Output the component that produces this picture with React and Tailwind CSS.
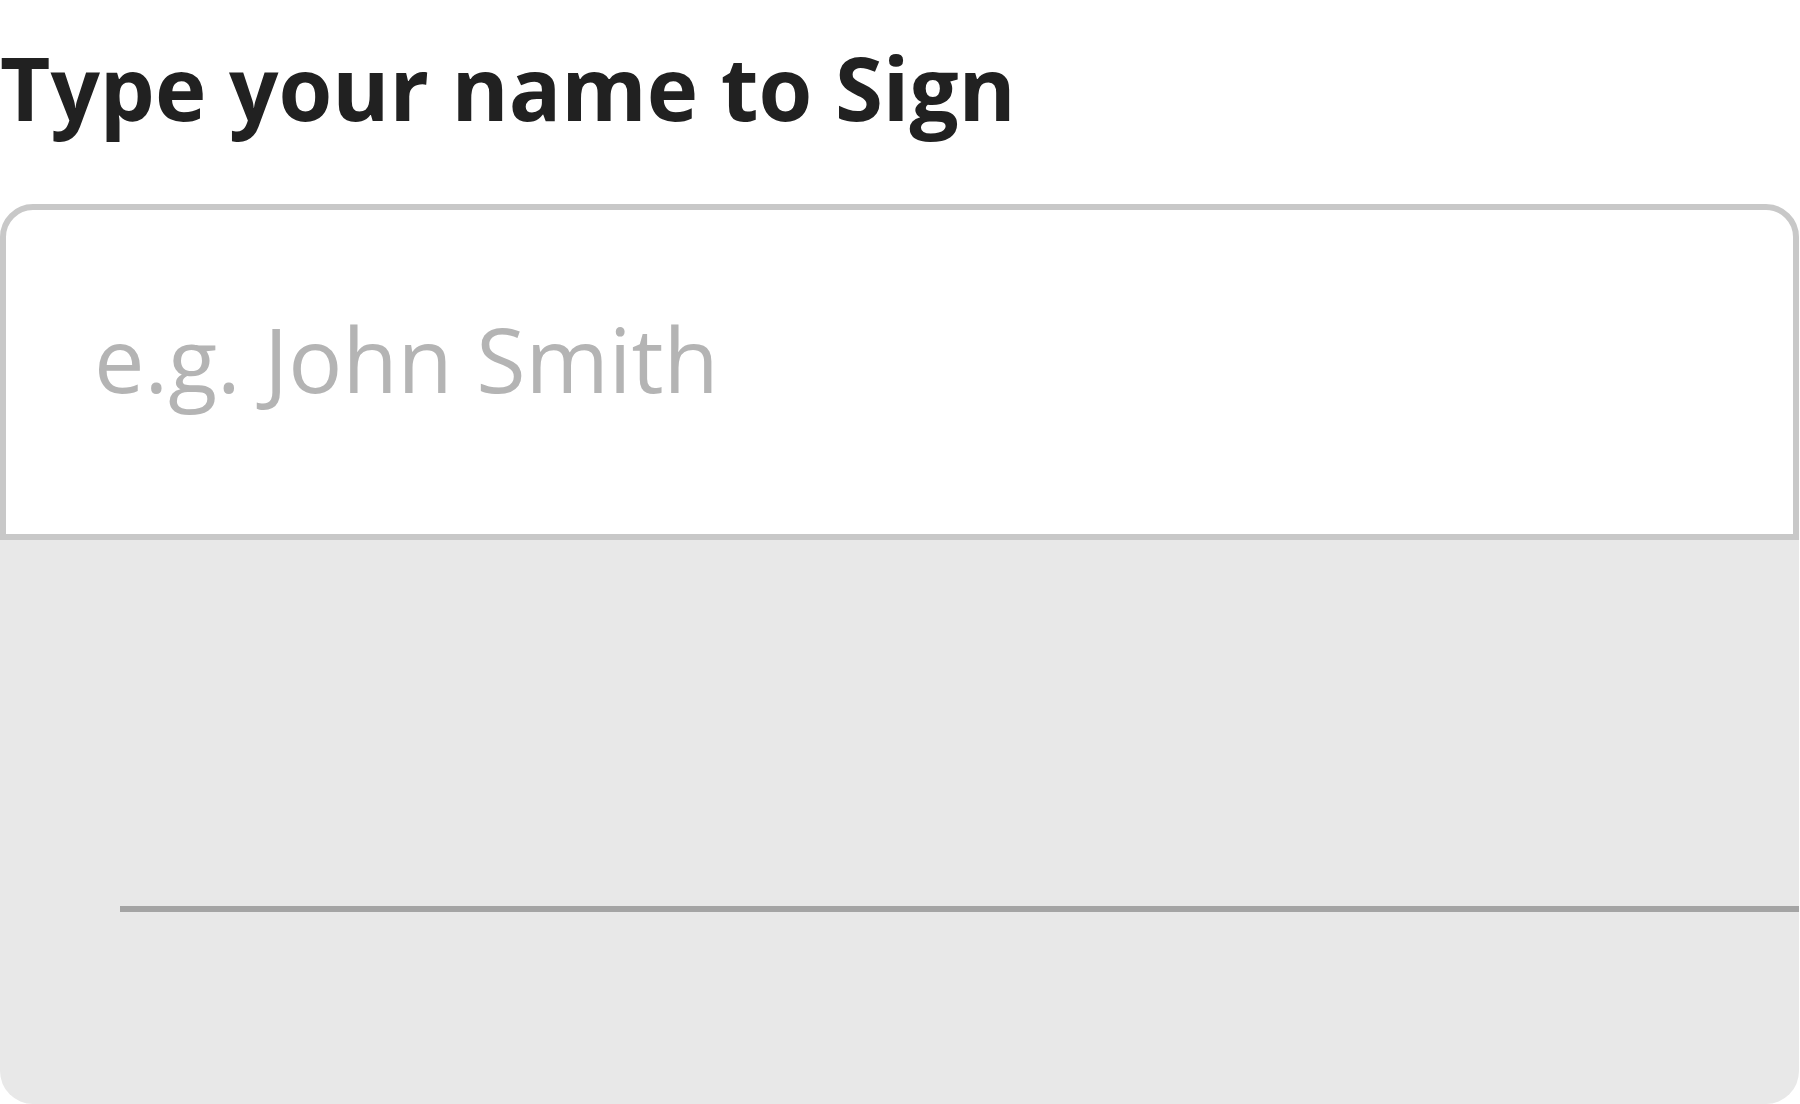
export default function App() {
  return (
    <div className="w-[1800px] h-[1104px] bg-white overflow-hidden flex flex-col" style={{ fontFamily: '"Open Sans", "Noto Sans", sans-serif' }}>
      <h1 className="text-[87px] font-bold leading-[117px] text-[#212121] pt-[29px] mb-[58px] whitespace-nowrap" style={{ fontFamily: '"Open Sans", sans-serif' }}>
        Type your name to Sign
      </h1>
      <div className="w-[1799px] h-[336px] border-[6px] border-[#c8c8c8] rounded-t-[33px] bg-white flex items-center pl-[88px] pb-[28px]">
        <input
          type="text"
          placeholder="e.g. John Smith"
          className="w-full bg-transparent outline-none text-[90px] leading-[122px] text-[#333] placeholder:text-[#b4b4b4]"
          style={{ fontFamily: '"Open Sans", sans-serif' }}
        />
      </div>
      <div className="w-[1799px] flex-1 bg-[#e8e8e8] rounded-b-[33px] flex flex-col pt-[366px] pl-[120px]">
        <div className="h-[6px] bg-[#a4a4a4] w-full"></div>
      </div>
    </div>
  );
}
